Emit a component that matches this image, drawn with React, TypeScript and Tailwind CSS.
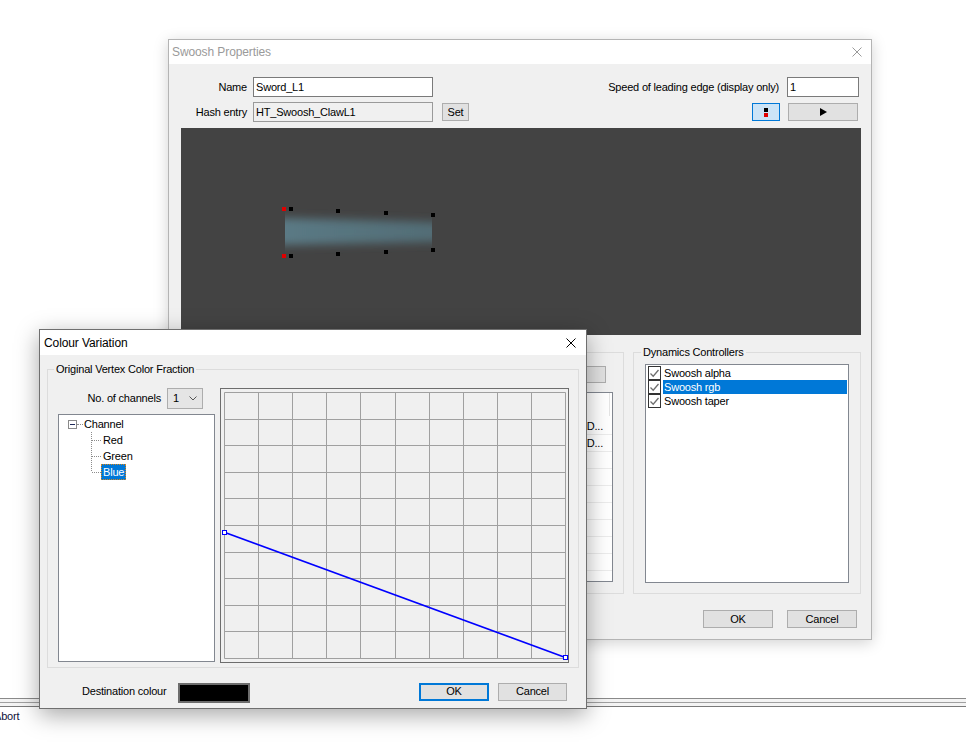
import React from 'react';

// ── Small drawing helpers ─────────────────────────────────
const CloseX = ({ color }: { color: string }) => (
  <svg width="10" height="10" viewBox="0 0 10 10" className="block">
    <path d="M0.5 0.5 L9.5 9.5 M9.5 0.5 L0.5 9.5" stroke={color} strokeWidth="1" fill="none" />
  </svg>
);

const CheckBox = () => (
  <div className="w-[13px] h-[14px] border border-[#333333] bg-white flex items-center justify-center shrink-0">
    <svg width="11" height="11" viewBox="0 0 11 11" className="block">
      <path d="M1.5 5.5 L4.2 8.2 L9.5 2" stroke="#6e6e6e" strokeWidth="1.3" fill="none" />
    </svg>
  </div>
);

const TreeConn = ({ last }: { last?: boolean }) => (
  <svg width="10" height="16" className="block shrink-0">
    <line x1="0.5" y1="0" x2="0.5" y2={last ? 8 : 16} stroke="#8c8c8c" strokeDasharray="1 1" />
    <line x1="1" y1="8.5" x2="10" y2="8.5" stroke="#8c8c8c" strokeDasharray="1 1" />
  </svg>
);

const WinButton = ({ children, className = '' }: { children: React.ReactNode; className?: string }) => (
  <div className={`flex items-center justify-center bg-[#e1e1e1] border border-[#adadad] shrink-0 ${className}`}>
    {children}
  </div>
);

// ── Swoosh preview (dark viewport) ────────────────────────
const SwooshPreview = () => {
  const top = [[155, 81], [203, 83], [250, 85]];
  const bottom = [[155, 124], [203, 122], [250, 120]];
  return (
    <svg width="680" height="207" className="block">
      <defs>
        <filter id="soft" x="-10%" y="-80%" width="120%" height="260%">
          <feGaussianBlur stdDeviation="0.4 4" />
        </filter>
        <linearGradient id="fadeR" x1="0" y1="0" x2="1" y2="0">
          <stop offset="0" stopColor="#5b7a85" />
          <stop offset="1" stopColor="#526d76" />
        </linearGradient>
      </defs>
      <clipPath id="bandClip">
        <rect x="104" y="70" width="148" height="70" />
      </clipPath>
      <g clipPath="url(#bandClip)">
        <polygon points="100,90 251,94 251,114 100,117" fill="url(#fadeR)" filter="url(#soft)" />
      </g>
      <rect x="101" y="79" width="4" height="4" fill="#e00000" />
      <rect x="108" y="79" width="4" height="4" fill="#000" />
      <rect x="101" y="126" width="4" height="4" fill="#e00000" />
      <rect x="108" y="126" width="4" height="4" fill="#000" />
      {top.concat(bottom).map(([x, y]) => (
        <rect key={`${x}-${y}`} x={x} y={y} width="4" height="4" fill="#000" />
      ))}
    </svg>
  );
};

// ── Colour curve grid ─────────────────────────────────────
const CurveGrid = () => {
  const cols = Array.from({ length: 11 }, (_, i) => Math.round(3 + i * 34.1) + 0.5);
  const rows = Array.from({ length: 11 }, (_, i) => Math.round(3 + i * 26.6) + 0.5);
  return (
    <svg width="347" height="273" className="block">
      {cols.map(x => (
        <line key={`c${x}`} x1={x} y1={rows[0]} x2={x} y2={rows[10]} stroke="#a0a0a0" />
      ))}
      {rows.map(y => (
        <line key={`r${y}`} x1={cols[0]} y1={y} x2={cols[10]} y2={y} stroke="#a0a0a0" />
      ))}
      <line x1="4" y1="143.5" x2="343" y2="268" stroke="#0000ff" strokeWidth="1.7" />
      <rect x="1.5" y="141.5" width="4" height="4" fill="#ffffff" stroke="#0000ff" />
      <rect x="342.5" y="266.5" width="4" height="4" fill="#ffffff" stroke="#0000ff" />
    </svg>
  );
};

// ── Swoosh Properties window (inactive, behind) ───────────
const SwooshProperties = () => (
  <div className="absolute left-[168px] top-[39px] w-[704px] h-[601px] border border-[#b4b4b4] bg-[#f0f0f0] shadow-[0_3px_14px_rgba(0,0,0,0.18)] flex flex-col">
    <div className="h-[24px] bg-white flex items-center justify-between pl-[3px] pr-[9px] shrink-0">
      <span className="text-[12px] text-[#9a9a9a] tracking-[-0.1px]">Swoosh Properties</span>
      <CloseX color="#9a9a9a" />
    </div>

    <div className="flex-1 flex flex-col pl-[12px] pr-[10px]">
      {/* Row 1 */}
      <div className="mt-[13px] h-[20px] flex items-center justify-between">
        <div className="flex items-center">
          <span className="w-[66px] text-right">Name</span>
          <div className="ml-[6px] w-[180px] h-[20px] bg-white border border-[#7a7a7a] flex items-center pl-[2px]">Sword_L1</div>
        </div>
        <div className="flex items-center mr-[2px]">
          <span>Speed of leading edge (display only)</span>
          <div className="ml-[8px] w-[72px] h-[20px] bg-white border border-[#7a7a7a] flex items-center pl-[2px]">1</div>
        </div>
      </div>

      {/* Row 2 */}
      <div className="mt-[5px] h-[20px] flex items-center justify-between">
        <div className="flex items-center">
          <span className="w-[66px] text-right">Hash entry</span>
          <div className="ml-[6px] w-[180px] h-[20px] bg-[#f0f0f0] border border-[#9a9a9a] flex items-center pl-[2px]">HT_Swoosh_ClawL1</div>
          <WinButton className="ml-[9px] w-[27px] h-[18px]">Set</WinButton>
        </div>
        <div className="flex items-center mr-[3px]">
          <div className="w-[28px] h-[18px] bg-[#cce4f7] border border-[#0078d7] flex flex-col items-center justify-center gap-[1px]">
            <div className="w-[4px] h-[4px] bg-black" />
            <div className="w-[4px] h-[4px] bg-[#e00000]" />
          </div>
          <WinButton className="ml-[8px] w-[70px] h-[18px]">
            <svg width="7" height="8" viewBox="0 0 7 8" className="block">
              <polygon points="0,0 7,4 0,8" fill="#000" />
            </svg>
          </WinButton>
        </div>
      </div>

      {/* Viewport */}
      <div className="mt-[6px] w-[680px] h-[207px] bg-[#434343] shrink-0">
        <SwooshPreview />
      </div>

      {/* Group boxes */}
      <div className="mt-[17px] flex h-[242px] shrink-0">
        <div className="relative w-[443px] h-full border border-[#dcdcdc] flex flex-col items-end">
          <WinButton className="mt-[13px] mr-[17px] w-[80px] h-[17px]">...</WinButton>
          <div className="mt-[9px] mr-[10px] w-[420px] h-[190px] bg-white border border-[#828790] overflow-hidden flex flex-col">
            <div className="h-[25px] shrink-0 flex justify-end">
              <div className="w-px h-[23px] bg-[#e5e5e5] mr-[2px]" />
            </div>
            {Array.from({ length: 10 }).map((_, i) => (
              <div key={i} className="h-[17px] shrink-0 border-b border-[#ececec] flex items-center justify-end pr-[9px]">
                {i < 2 ? 'D...' : ''}
              </div>
            ))}
          </div>
        </div>

        <div className="relative ml-[9px] w-[228px] h-full border border-[#dcdcdc]">
          <span className="absolute -top-[8px] left-[7px] px-[2px] bg-[#f0f0f0] leading-[14px]">Dynamics Controllers</span>
          <div className="mt-[11px] ml-[11px] w-[204px] h-[219px] bg-white border border-[#828790] flex flex-col pt-[1px] pl-[2px] pr-[1px]">
            {['Swoosh alpha', 'Swoosh rgb', 'Swoosh taper'].map((label, i) => (
              <div key={label} className="h-[14px] flex items-center">
                <CheckBox />
                <span className={`ml-[2px] flex-1 h-[14px] flex items-center pl-[1px] ${i === 1 ? 'bg-[#0078d7] text-white' : ''}`}>{label}</span>
              </div>
            ))}
          </div>
        </div>
      </div>

      {/* Dialog buttons */}
      <div className="mt-[16px] flex justify-end mr-[4px]">
        <WinButton className="w-[70px] h-[18px]">OK</WinButton>
        <WinButton className="ml-[14px] w-[70px] h-[18px]">Cancel</WinButton>
      </div>
    </div>
  </div>
);

// ── Colour Variation dialog (active, front) ───────────────
const ColourVariation = () => (
  <div className="absolute left-[39px] top-[329px] w-[548px] h-[380px] border border-[#6f6f6f] bg-[#f0f0f0] shadow-[0_6px_22px_rgba(0,0,0,0.35)] flex flex-col">
    <div className="h-[25px] bg-white flex items-center justify-between pl-[4px] pr-[10px] shrink-0">
      <span className="text-[12px] text-black tracking-[-0.1px]">Colour Variation</span>
      <CloseX color="#000000" />
    </div>

    <div className="flex-1 flex flex-col px-[7px]">
      <div className="relative mt-[14px] h-[299px] border border-[#dcdcdc] flex shrink-0">
        <span className="absolute -top-[8px] left-[6px] px-[2px] bg-[#f0f0f0] leading-[14px]">Original Vertex Color Fraction</span>

        <div className="ml-[10px] flex flex-col w-[157px]">
          <div className="mt-[18px] h-[21px] flex items-center justify-end pr-[12px]">
            <span>No. of channels</span>
            <div className="ml-[6px] w-[36px] h-[21px] bg-[#e5e5e5] border border-[#adadad] flex items-center justify-between pl-[5px] pr-[5px]">
              <span>1</span>
              <svg width="8" height="5" viewBox="0 0 8 5" className="block">
                <path d="M0.5 0.5 L4 4 L7.5 0.5" stroke="#555" strokeWidth="1" fill="none" />
              </svg>
            </div>
          </div>

          <div className="mt-[5px] w-[157px] h-[248px] bg-white border border-[#828790] pt-[1px] flex flex-col">
            <div className="h-[16px] flex items-center pl-[9px]">
              <div className="w-[9px] h-[9px] border border-[#8a8a8a] bg-white flex items-center justify-center">
                <div className="w-[5px] h-px bg-[#1f2a5a]" />
              </div>
              <div className="w-[6px] border-t border-dotted border-[#8c8c8c]" />
              <span className="ml-[1px]">Channel</span>
            </div>
            {['Red', 'Green', 'Blue'].map((c, i) => (
              <div key={c} className="h-[16px] flex items-center pl-[32px]">
                <TreeConn last={i === 2} />
                <span className={`h-[16px] flex items-center px-[2px] ${i === 2 ? 'bg-[#0078d7] text-white outline outline-1 outline-dotted outline-[#d9861c] -outline-offset-1' : ''}`}>{c}</span>
              </div>
            ))}
          </div>
        </div>

        <div className="ml-[5px] mt-[18px] w-[349px] h-[275px] border border-[#6d6d6d]">
          <CurveGrid />
        </div>
      </div>

      <div className="mt-[13px] h-[21px] flex items-center pr-[12px]">
        <span className="ml-[35px] w-[96px]">Destination colour</span>
        <div className="w-[72px] h-[20px] bg-black border-2 border-[#6d6d6d] mt-[2px]" />
        <div className="flex-1" />
        <div className="w-[70px] h-[18px] bg-[#e1e1e1] border-2 border-[#0078d7] flex items-center justify-center">OK</div>
        <WinButton className="ml-[9px] w-[69px] h-[18px]">Cancel</WinButton>
      </div>
    </div>
  </div>
);

export default function App() {
  return (
    <div className="relative w-[966px] h-[752px] bg-white overflow-hidden font-['Liberation_Sans',Arial,sans-serif] text-[11px] tracking-[-0.2px] text-black leading-none">
      {/* Window behind both dialogs */}
      <div className="absolute left-0 top-[698px] w-full flex flex-col">
        <div className="h-px bg-[#8a8a8a]" />
        <div className="h-[3px] bg-[#f4f4f4]" />
        <div className="h-px bg-[#a0a0a0]" />
        <div className="h-[3px] bg-[#f4f4f4]" />
        <div className="h-px bg-[#7a7a7a]" />
        <span className="mt-[4px] -ml-[6px] text-[#10103a]">Abort</span>
      </div>

      <SwooshProperties />
      <ColourVariation />
    </div>
  );
}
